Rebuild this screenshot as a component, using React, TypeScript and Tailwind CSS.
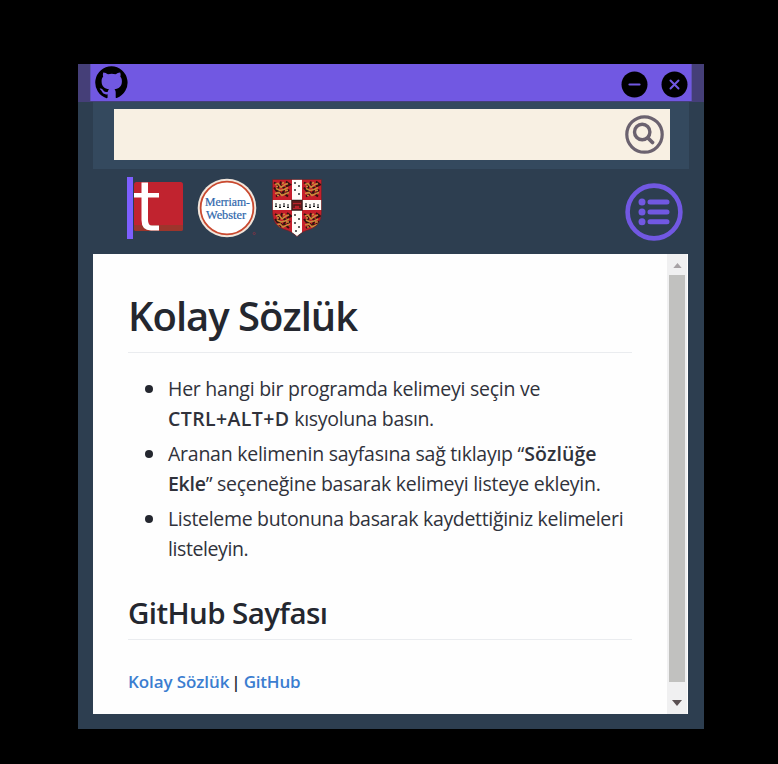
import React from "react";

function GithubMark() {
  return (
    <svg viewBox="0 0 33 33" className="h-[33px] w-[33px]">
      <path d="M16.5 0.2A16.4 16.4 0 0 0 11.6 32.2Q12.6 32.3 12.6 31.2V28.2C9.5 28.9 7.7 27.5 6.9 25.6C6.3 24.3 5.8 23.8 5 23.2C4.4 22.6 5 22.4 5.6 22.5C8.6 22.9 8.2 26 11 26C12 26 12.7 25.7 12.9 25.4C13 24.5 13.4 23.7 14 23.2C9.7 22.6 6.6 20.6 6.6 15.4C6.6 13.2 7.2 11.8 8.2 10.6C7.8 9.5 7.7 8 8.3 6.4C9.7 6.3 11.5 7.2 13 8.3A16 16 0 0 1 20.5 8.3C22 7.2 23.8 6.3 25.2 6.4C25.8 8 25.7 9.5 25.3 10.6C26.3 11.8 26.9 13.2 26.9 15.4C26.9 20.6 23.8 22.6 19.5 23.2C20.3 24 20.7 25 20.7 26.7V31.2Q20.7 32.3 21.8 32A16.4 16.4 0 0 0 16.5 0.2Z" />
    </svg>
  );
}

function TurengLogo() {
  return (
    <svg viewBox="0 0 49 49" className="h-[49px] w-[49px]">
      <rect width="49" height="49" rx="2.5" fill="#c1232f" />
      <path d="M0 43H49V46.5Q49 49 46.5 49H2.5Q0 49 0 46.5Z" fill="#9c352c" />
      <path d="M7.5 0.5H14V11H25V15.5H14V38Q14 43.5 18 43.5H25V48.5H17Q7.5 48.5 7.5 38V15.5H0V11H7.5Z" fill="#fff" />
    </svg>
  );
}

function MerriamLogo() {
  return (
    <svg viewBox="0 0 60 60" className="h-[60px] w-[60px]">
      <circle cx="30" cy="30" r="29.3" fill="#f1e6dc" />
      <circle cx="30" cy="30" r="26.4" fill="#fff" stroke="#c9492f" strokeWidth="1.8" />
      <g fill="#2d66ab" stroke="#2d66ab" strokeWidth="0.2" fontFamily="'Liberation Serif', serif" fontSize="11.8">
        <text x="8" y="28" textLength="45" lengthAdjust="spacingAndGlyphs">Merriam-</text>
        <text x="9" y="41.3" textLength="40" lengthAdjust="spacingAndGlyphs">Webster</text>
      </g>
      <circle cx="57.3" cy="55.5" r="1.1" fill="none" stroke="#8a3345" strokeWidth="0.8" />
    </svg>
  );
}

function Lion({ x, y }: { x: number; y: number }) {
  return (
    <g transform={`translate(${x} ${y})`} fill="none">
      <path d="M1 2L6 5L4 9L8 13L3 16M8 1L7 5L12 8L10 12L15 16M13 1L17 4L13 6M1 7L4 11M16 9L13 13" stroke="#33130f" strokeWidth="2" />
      <path d="M2 4L5 3L8 7L12 4L15 3M3 8L7 10L11 9L15 7M2 13L6 12L9 15L13 13L16 12M9 3L11 2M6 15L4 15M12 10L15 10M5 6L3 6" stroke="#c98a3a" strokeWidth="1.6" />
    </g>
  );
}

function CambridgeLogo() {
  return (
    <svg viewBox="0 0 50 58" className="h-[58px] w-[50px]">
      <defs>
        <clipPath id="shield">
          <path d="M0.5 0.5H49.5V34Q49 46 39 50Q30 52 25 57.5Q20 52 11 50Q1 46 0.5 34Z" />
        </clipPath>
      </defs>
      <g clipPath="url(#shield)">
        <rect width="50" height="58" fill="#c61f2b" />
        <Lion x={1} y={1.5} />
        <Lion x={31} y={1.5} />
        <Lion x={2} y={33} />
        <Lion x={31} y={33} />
        <path d="M20 0H30V58H20ZM0 21H50V31H0Z" fill="#fffdf8" />
        <path d="M20 21.5H30V31H20Z" fill="#b8222a" stroke="#351917" strokeWidth="1.5" />
        <path d="M21 23H29M22 29V26H28V29" stroke="#4a1816" strokeWidth="1.5" fill="none" />
        <path d="M23 3V5M27 6V8M23 10V12M27 14V16M23 35V37M27 39V41M23 43V45M27 47V49M24 51V53" stroke="#111" strokeWidth="1.3" />
        <path d="M4 24V27M8 25V28M12 24V27M16 25V28M34 24V27M38 25V28M42 24V27M46 25V28" stroke="#111" strokeWidth="1" />
        <path d="M3 27.5H5M11 27.5H13M33 27.5H35M41 27.5H43M7 28.5H9M15 28.5H17M37 28.5H39M45 28.5H47" stroke="#111" strokeWidth="1.2" />
      </g>
      <path d="M0.5 0.5H49.5V34Q49 46 39 50Q30 52 25 57.5Q20 52 11 50Q1 46 0.5 34Z" fill="none" stroke="#63262b" strokeWidth="0.7" />
    </svg>
  );
}

const items = [
  [
    <span className="tracking-[-0.25px]">Her hangi bir programda kelimeyi seçin ve</span>,
    <span className="tracking-[-0.32px]"><b className="font-semibold tracking-[0.4px]">CTRL+ALT+D</b> kısyoluna basın.</span>,
  ],
  [
    <span className="tracking-[-0.25px]">Aranan kelimenin sayfasına sağ tıklayıp “<b className="font-semibold tracking-[0.1px]">Sözlüğe</b></span>,
    <span className="tracking-[-0.27px]"><b className="font-semibold">Ekle</b>” seçeneğine basarak kelimeyi listeye ekleyin.</span>,
  ],
  [
    <span className="tracking-[-0.32px]">Listeleme butonuna basarak kaydettiğiniz kelimeleri</span>,
    <span className="tracking-[-0.4px]">listeleyin.</span>,
  ],
];

export default function App() {
  return (
    <div className="h-[764px] w-[778px] bg-black pl-[78px] pt-16 font-['Open_Sans','Noto_Sans',sans-serif]">
      <main className="flex h-[665px] w-[626px] flex-col bg-[#2d3e50]">
        <header className="h-[38px] shrink-0 bg-[#453f78] px-3">
          <div className="flex h-[37px] items-center border-x border-[#6052b8] bg-[#7158e2] pl-1 pr-[3px]">
            <GithubMark />
            <div className="ml-auto mt-1 flex gap-[13px]">
              <button aria-label="Küçült">
                <svg viewBox="0 0 27 27" className="h-[27px] w-[27px]"><circle cx="13.5" cy="13.5" r="13" /><path d="M8.5 13.5H18.5" stroke="#7158e2" strokeWidth="2.2" strokeLinecap="round" /></svg>
              </button>
              <button aria-label="Kapat">
                <svg viewBox="0 0 27 27" className="h-[27px] w-[27px]"><circle cx="13.5" cy="13.5" r="13" /><path d="M9.5 9.5L17.5 17.5M17.5 9.5L9.5 17.5" stroke="#7158e2" strokeWidth="2" strokeLinecap="round" /></svg>
              </button>
            </div>
          </div>
        </header>
        <div className="ml-[15px] h-[67px] w-[596px] shrink-0 bg-[#34495e] px-[21px] pt-[7px]">
          <div className="flex h-[51px] w-[556px] items-center justify-end bg-[#f8f0e3] pr-[6px]">
            <svg viewBox="0 0 39 39" className="h-[39px] w-[39px]" fill="none" stroke="#6b626f" strokeLinecap="round">
              <circle cx="19.5" cy="19.5" r="17.7" strokeWidth="3.2" />
              <circle cx="17.2" cy="17" r="7.7" strokeWidth="3.4" />
              <path d="M23 23L27.5 27.5" strokeWidth="3.8" />
            </svg>
          </div>
        </div>
        <nav className="flex h-[85px] shrink-0 items-start pl-[49px] pr-[21px] pt-2">
          <span className="h-[62px] w-[6px] bg-[#7d5fff]" />
          <span className="ml-[1px] mt-[5px]"><TurengLogo /></span>
          <span className="ml-[14px] mt-[1px]"><MerriamLogo /></span>
          <span className="ml-[15px] mt-[2px]"><CambridgeLogo /></span>
          <button aria-label="Liste" className="ml-auto mt-[6px]">
            <svg viewBox="0 0 58 58" className="h-[58px] w-[58px]" fill="none" stroke="#7158e2" strokeLinecap="round">
              <circle cx="29" cy="29" r="26.4" strokeWidth="4.6" />
              <path d="M25 19H42M25 29H42M25 38.7H42" strokeWidth="5" />
              <g fill="#7158e2" stroke="none"><circle cx="17" cy="19" r="3.5" /><circle cx="17" cy="29" r="3.5" /><circle cx="17" cy="38.7" r="3.5" /></g>
            </svg>
          </button>
        </nav>
        <section className="ml-[15px] flex h-[460px] w-[595px] bg-[#fefefe] text-[#24272f]">
          <article className="w-[574px] px-[35px]">
            <h1 className="mt-[35px] h-[64px] whitespace-nowrap border-b border-[#eaecef] text-[40px] font-semibold leading-[54px]"><span className="tracking-[-1px]">Kolay Sözlük</span></h1>
            <ul className="mt-[20px] flex list-none flex-col gap-[5px] text-[19.5px] leading-[30px] text-[#30323b]">
              {items.map((lines, i) => (
                <li key={i} className="flex h-[60px] whitespace-nowrap">
                  <span className="ml-[17px] mr-[15px] mt-[12px] h-2 w-2 shrink-0 rounded-full bg-[#24272f]" />
                  <div className="pt-px">
                    <div className="h-[30px]">{lines[0]}</div>
                    <div className="h-[30px]">{lines[1]}</div>
                  </div>
                </li>
              ))}
            </ul>
            <h2 className="mt-[30px] h-[47px] border-b border-[#eaecef] text-[29.5px] font-semibold leading-[40px]"><span className="tracking-[-0.6px]">GitHub Sayfası</span></h2>
            <p className="mt-[28px] whitespace-nowrap text-[17px] font-semibold leading-[28px]">
              <a className="tracking-[-0.1px] text-[#3b7dd0]">Kolay Sözlük</a><span className="ml-[2px] mr-[3px]">|</span><a className="tracking-[-0.2px] text-[#3b7dd0]">GitHub</a>
            </p>
          </article>
          <aside className="flex w-[20px] flex-col items-center bg-[#f0f0f1]">
            <svg viewBox="0 0 10 6" className="mt-[9px] h-[5px] w-[9px]"><path d="M5 0L10 6H0Z" fill="#a7a2a5" /></svg>
            <div className="mt-[7px] h-[407px] w-4 bg-[#c1c1bf]" />
            <svg viewBox="0 0 10 6" className="mt-[18px] h-[6px] w-[10px]"><path d="M0 0H10L5 6Z" fill="#5a5052" /></svg>
          </aside>
        </section>
      </main>
    </div>
  );
}
